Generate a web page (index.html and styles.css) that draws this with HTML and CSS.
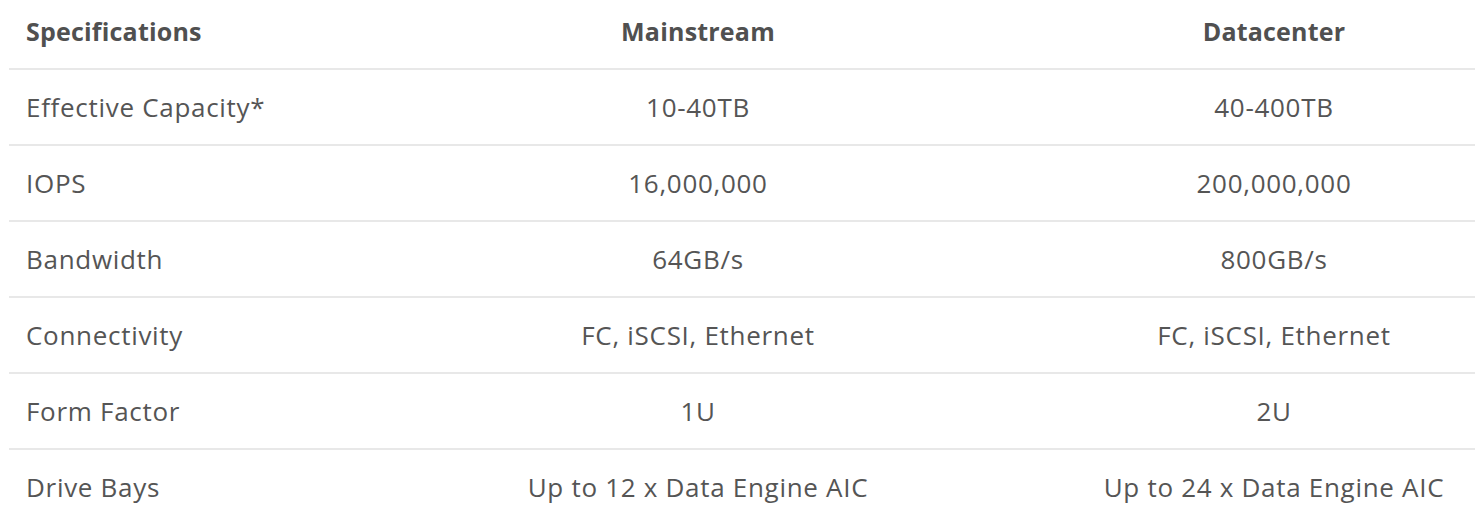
FILE: index.html
```html
<!DOCTYPE html>
<html>
<head>
<meta charset="utf-8">
<link rel="stylesheet" href="styles.css">
</head>
<body>
<div class="specs">
  <div class="row head">
    <div class="cell name">Specifications</div>
    <div class="cell">Mainstream</div>
    <div class="cell">Datacenter</div>
  </div>
  <div class="row">
    <div class="cell name">Effective Capacity*</div>
    <div class="cell">10-40TB</div>
    <div class="cell">40-400TB</div>
  </div>
  <div class="row">
    <div class="cell name">IOPS</div>
    <div class="cell">16,000,000</div>
    <div class="cell">200,000,000</div>
  </div>
  <div class="row">
    <div class="cell name">Bandwidth</div>
    <div class="cell">64GB/s</div>
    <div class="cell">800GB/s</div>
  </div>
  <div class="row">
    <div class="cell name">Connectivity</div>
    <div class="cell">FC, iSCSI, Ethernet</div>
    <div class="cell">FC, iSCSI, Ethernet</div>
  </div>
  <div class="row">
    <div class="cell name">Form Factor</div>
    <div class="cell">1U</div>
    <div class="cell">2U</div>
  </div>
  <div class="row">
    <div class="cell name">Drive Bays</div>
    <div class="cell">Up to 12 x Data Engine AIC</div>
    <div class="cell">Up to 24 x Data Engine AIC</div>
  </div>
</div>
</body>
</html>
```

FILE: styles.css
```css
html, body {
  margin: 0;
  padding: 0;
  background: #ffffff;
}
body {
  font-family: "Open Sans", "Liberation Sans", sans-serif;
  color: #555555;
  overflow: hidden;
}
.specs {
  margin-left: 9px;
  width: 1466px;
}
.row {
  display: grid;
  grid-template-columns: 314px 750px 402px;
  height: 74px;
  border-bottom: 2px solid #e8e8e8;
  align-items: center;
  font-size: 26px;
  letter-spacing: 0.7px;
}
.row.head {
  height: 62px;
  padding-bottom: 6px;
  font-weight: 700;
  font-size: 25px;
  letter-spacing: 0.2px;
  color: #505050;
}
.cell {
  text-align: center;
  white-space: nowrap;
}
.cell.name {
  text-align: left;
  padding-left: 17px;
}
```
